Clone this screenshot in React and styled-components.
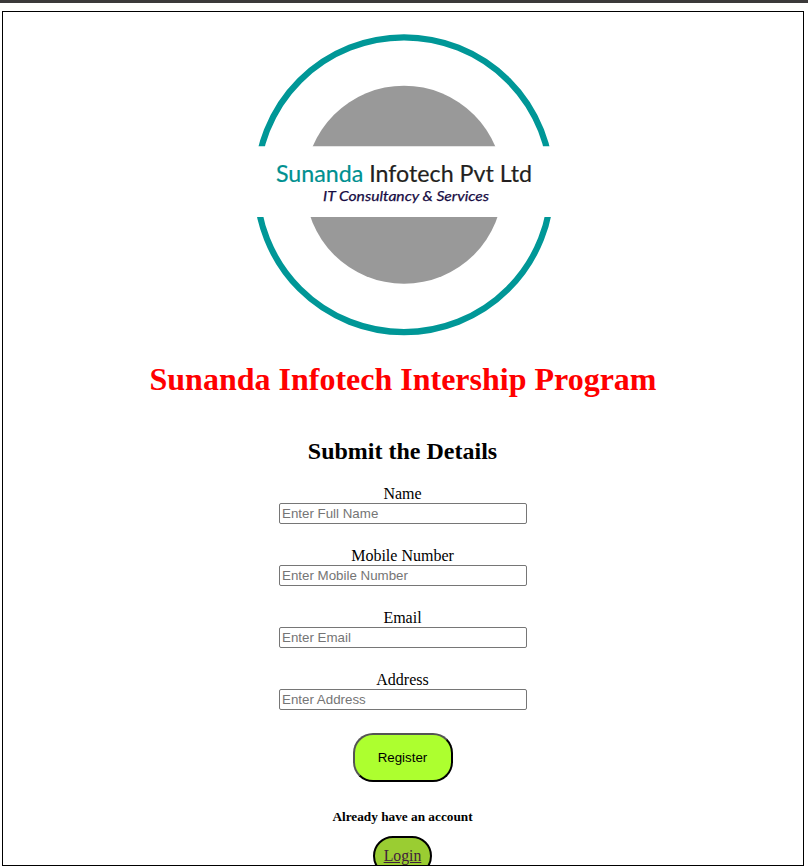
import React from "react";
import styled, { createGlobalStyle } from "styled-components";

const GlobalStyle = createGlobalStyle`
  *, *::before, *::after { box-sizing: border-box; }
  body {
    margin: 0;
    background: #fff;
    overflow: hidden;
    font-family: "Liberation Serif", "Times New Roman", serif;
    font-size: 16px;
    color: #000;
  }
`;

const Page = styled.div`
  height: 866px;
  padding: 8px 4px 0 2px;
  border-top: 3px solid #3b393a;
  overflow: hidden;
`;

const Panel = styled.main`
  height: 855px;
  border: 1px solid #000;
  overflow: hidden;
  display: flex;
  flex-direction: column;
  align-items: center;
`;

const Logo = styled.svg`
  display: block;
  flex: none;
  width: 300px;
  height: 306px;
  margin: 20px 0 0 2px;
  overflow: visible;
  font-family: Lato, sans-serif;
`;

const Title = styled.h1`
  margin: 23px 0 0;
  font-size: 32px;
  line-height: 37px;
  color: #f00;
  white-space: nowrap;
`;

const Subtitle = styled.h2`
  margin: 40px 1px 0 0;
  font-size: 24px;
  line-height: 27px;
`;

const Form = styled.form`
  display: flex;
  flex-direction: column;
  align-items: center;
  gap: 23px;
  margin-top: 20px;
`;

const Field = styled.label`
  display: flex;
  flex-direction: column;
  align-items: center;
  line-height: 18px;
`;

const Caption = styled.span`
  padding-right: 1px;
`;

const Input = styled.input`
  width: 248px;
  height: 21px;
  padding: 1px 2px;
  border: 1px solid #767676;
  border-radius: 2px;
  background: #fff;
  font: 13.333px "Liberation Sans", Arial, sans-serif;
  outline: none;
  &::placeholder { color: #757575; opacity: 1; }
`;

const RegisterButton = styled.button`
  width: 100px;
  height: 49px;
  padding: 0 1px 0 0;
  border: 2px outset #000;
  border-radius: 20px;
  background: greenyellow;
  color: #000;
  font: 13.333px "Liberation Sans", Arial, sans-serif;
`;

const AccountNote = styled.h5`
  margin: 27px 1px 0 0;
  font-size: 13.28px;
  line-height: 15px;
`;

const LoginLink = styled.a`
  flex: none;
  margin: 12px 1px 0 0;
  padding: 9px;
  border: 2px solid #000;
  border-radius: 20px;
  background: yellowgreen;
  color: #40203c;
  font-size: 15.8px;
  line-height: 18px;
  text-decoration: underline;
`;

const fields = [
  ["Name", "Enter Full Name"],
  ["Mobile Number", "Enter Mobile Number"],
  ["Email", "Enter Email"],
  ["Address", "Enter Address"],
];

function CompanyLogo() {
  return (
    <Logo viewBox="254 32 300 306" role="img" aria-label="Sunanda Infotech Pvt Ltd">
      <defs>
        <clipPath id="halves">
          <rect x="250" y="30" width="308" height="116.3" />
          <rect x="250" y="217" width="308" height="122" />
        </clipPath>
      </defs>
      <g clipPath="url(#halves)">
        <circle cx="404" cy="184.7" r="147.4" fill="none" stroke="#009797" strokeWidth="6.2" />
        <circle cx="404" cy="184.7" r="99" fill="#999" />
      </g>
      <text x="276" y="182" fontSize="23.5" fill="#231f20" stroke="#231f20" strokeWidth="0.2" textLength="256" lengthAdjust="spacingAndGlyphs">
        <tspan fill="#009090" stroke="#009090">Sunanda</tspan> Infotech Pvt Ltd
      </text>
      <text x="323" y="201" fontSize="14" fontStyle="italic" fill="#160b43" stroke="#160b43" strokeWidth="0.25" textLength="166" lengthAdjust="spacingAndGlyphs">
        IT Consultancy &amp; Services
      </text>
    </Logo>
  );
}

export default function App() {
  return (
    <Page>
      <GlobalStyle />
      <Panel>
        <CompanyLogo />
        <Title>Sunanda Infotech Intership Program</Title>
        <Subtitle>Submit the Details</Subtitle>
        <Form>
          {fields.map(([label, placeholder]) => (
            <Field key={label}>
              <Caption>{label}</Caption>
              <Input placeholder={placeholder} />
            </Field>
          ))}
          <RegisterButton type="button">Register</RegisterButton>
        </Form>
        <AccountNote>Already have an account</AccountNote>
        <LoginLink href="#">Login</LoginLink>
      </Panel>
    </Page>
  );
}
